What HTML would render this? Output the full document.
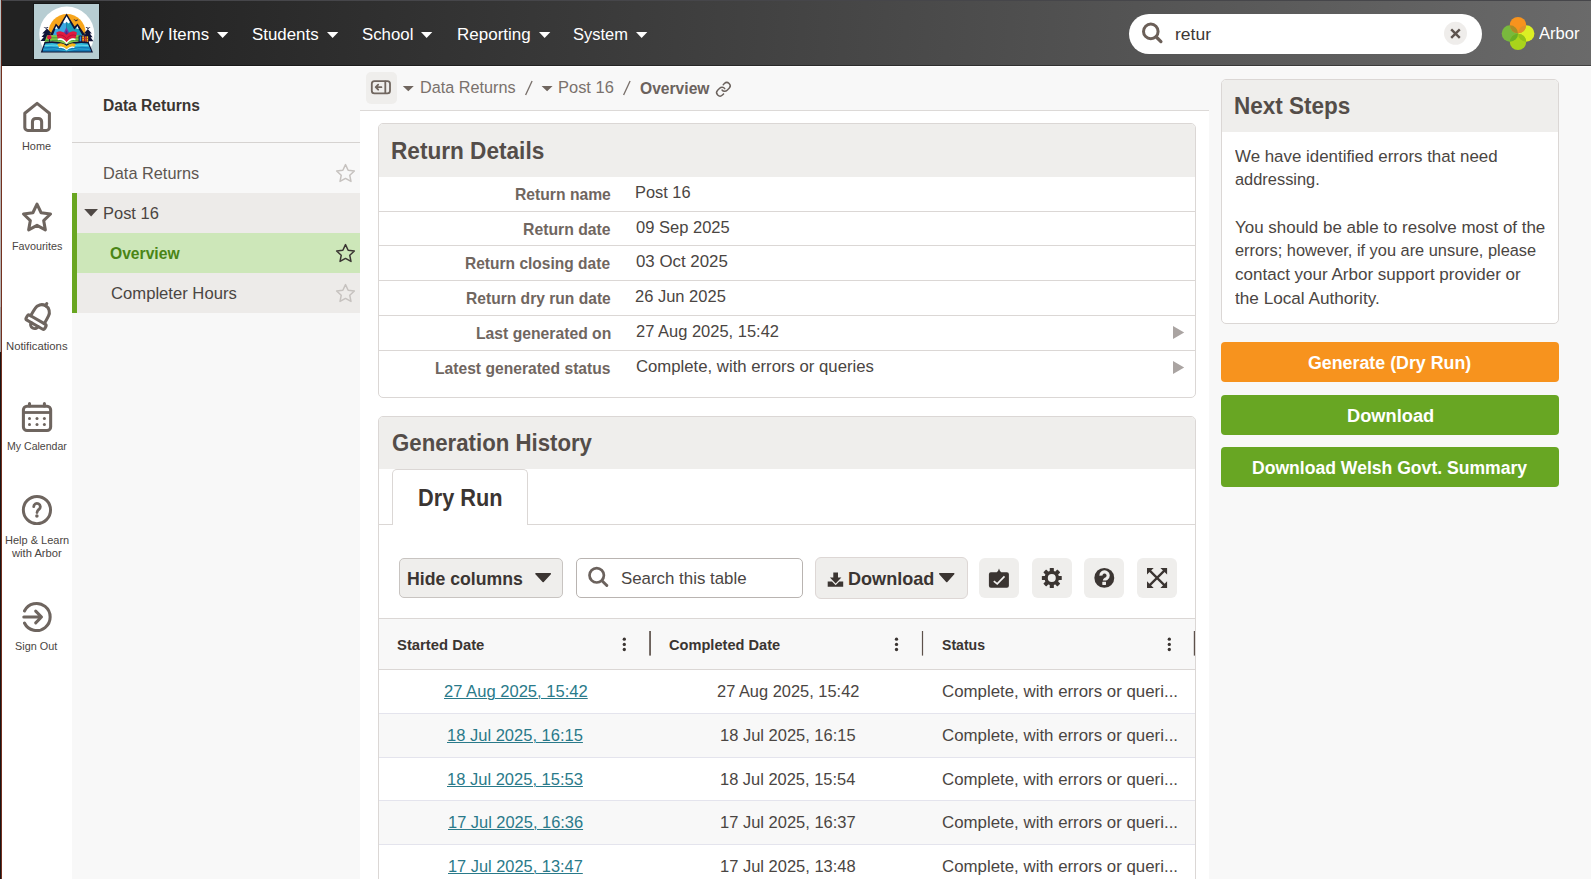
<!DOCTYPE html>
<html><head><meta charset="utf-8"><title>Data Returns</title>
<style>
html,body{margin:0;padding:0;}
body{width:1591px;height:879px;overflow:hidden;position:relative;background:#f8f8f8;font-family:"Liberation Sans", sans-serif;}
div,span,svg{box-sizing:border-box;}
svg{position:absolute;overflow:visible;}
</style></head><body>
<div style="position:absolute;left:0px;top:0px;width:1591px;height:66px;background:linear-gradient(93deg,#222 6%,#6a6a6a 100%);"></div>
<div style="position:absolute;left:0px;top:0px;width:1591px;height:1px;background:#46464a;"></div>
<div style="position:absolute;left:0px;top:65px;width:1591px;height:1px;background:rgba(0,0,0,.38);"></div>
<div style="position:absolute;left:0px;top:66px;width:1591px;height:1px;background:#fff;"></div>
<div style="position:absolute;left:33px;top:3px;width:67px;height:57px;background:#171717;"></div>
<svg style="left:34px;top:4px;overflow:hidden" width="65" height="55" viewBox="0 0 65 55">
<defs><clipPath id="lc"><rect x="0" y="0" width="65" height="47.500"/></clipPath>
<clipPath id="sunc"><rect x="0" y="0" width="65" height="31"/></clipPath></defs>
<rect width="65" height="55" fill="#b7cdd2"/>
<circle cx="32.800" cy="30.100" r="27.500" fill="#fff" clip-path="url(#lc)"/>
<circle cx="33" cy="28.600" r="18.600" fill="#f7a51b" clip-path="url(#sunc)"/>
<!-- trees -->
<path d="M13 24.500 l-4.800 5 h2.300 l-3 3.600 h2.300 l-3.300 4 h13 l-3.300-4 h2.300 l-3-3.600 h2.300z" fill="#0f1336"/>
<path d="M53.800 25 l-4 4.600 h2 l-2.800 3.600 h2 l-2.800 4 h11.200 l-2.800-4 h2 l-2.800-3.600 h2z" fill="#0f1336"/>
<!-- mountains outline -->
<path d="M15.800 31.500 L21.900 19.600 L24.700 22.400 L32.600 9.400 L40.600 22.400 L43.600 19.600 L51.500 31.500z" fill="#0f1336"/>
<path d="M18.800 31.500 L22.200 22.600 L25 25.400 L32.600 12.600 L32.600 31.500z" fill="#3aa8e2"/>
<path d="M32.600 12.600 L40.300 25.400 L43.300 22.600 L48.500 31.500 L32.600 31.500z" fill="#1b9db9"/>
<path d="M32.600 12.200 L36 18.200 L34.300 19.600 L32.600 17.800 L30.900 19.600 L29.200 18.200z" fill="#fff"/>
<path d="M22.200 22 l1.500 2.600 l-2.600 .3z M43.300 22 l1.500 2.900 l-2.600 -.3z" fill="#fff"/>
<path d="M28.800 31 L32.400 23.300 L36.200 31z" fill="#6b3aa6"/>
<path d="M30.600 31 L32.400 26.300 L34.300 31z" fill="#4c2a86"/>
<!-- birds -->
<path d="M9.500 23.300 q1.600-.8 2.500.7 q1-1.500 2.600-.6 q-1.600 0-2.600 1.700 q-.9-1.700-2.500-1.800z M39.400 15.800 q1.600-.8 2.500.7 q1-1.500 2.600-.6 q-1.600 0-2.600 1.700 q-.9-1.700-2.500-1.800z M51.500 23.400 q1.600-.8 2.500.7 q1-1.500 2.600-.6 q-1.600 0-2.600 1.700 q-.9-1.700-2.500-1.800z" fill="#0f1336"/>
<!-- fields -->
<path d="M10 39.500 L13 31.300 H46 V40z" fill="#7fc443"/>
<path d="M13 33.800 H45 M11.500 36.500 H45" stroke="#3f9a3c" stroke-width=".9"/>
<path d="M11 38.500 q6-2.500 12 0 M40 38.500 q3-1.500 6 0" stroke="#c8e68e" stroke-width="1" fill="none"/>
<!-- red tree -->
<circle cx="15.300" cy="33.300" r="2.200" fill="#e01a3f"/><rect x="15" y="35" width=".8" height="3.500" fill="#0f1336"/>
<!-- red book -->
<path d="M22.300 28.500 q5.500-3.500 10.300 2.200 q4.800-5.700 10.300-2.200 l-1.300 6.300 q-5-1.800-9 3.400 q-4-5.200-9-3.400z" fill="#e01a3f"/>
<path d="M23.200 31.500 q5-2 9.400 3.200 q4.400-5.200 9.400-3.200" stroke="#a80f2e" stroke-width=".8" fill="none"/>
<path d="M23.600 34.800 q5-1.800 9 3.400 q4-5.200 9-3.400 l-.3 1.500 q-5-1.300-8.700 3.700 q-3.700-5-8.700-3.700z" fill="#fff"/>
<!-- bookshelf -->
<rect x="44.600" y="31.600" width="10.200" height="7.800" fill="#0f1336"/>
<rect x="45.600" y="32.300" width="1.700" height="6.600" fill="#2f8fe0"/><rect x="48.200" y="32.300" width="1.900" height="6.600" fill="#f7a51b"/><rect x="50.600" y="32.300" width="1.700" height="6.600" fill="#e0432a"/><rect x="52.600" y="32.300" width="1.500" height="6.600" fill="#f9c21b"/>
<path d="M48 34.500 h6.400 M48 36.800 h6.400" stroke="#b5341c" stroke-width=".7"/>
<!-- big book base -->
<path d="M10.600 38 q11-2.500 22 2.200 q11-4.700 22-2.200 L59 48.600 H6.800z" fill="#0f1336"/>
<path d="M11.400 39.600 q10.500-2 21.200 2.400 q10.700-4.400 21.200-2.400 L57 47.300 H8.700z" fill="#2ab7da"/>
<path d="M9.800 43.300 q11-2 22.800 2 q11.800-4 22.800-2 L57 47.300 H8.700z" fill="#1579b7"/>
<path d="M10.500 41.600 q10.500-2 22 2 q11.500-4 22-2" stroke="#8fe0ee" stroke-width=".7" fill="none"/>
<path d="M9.500 45.300 q11-1.600 23 1.500 q12-3.100 23-1.500" stroke="#35c0e0" stroke-width=".8" fill="none"/>
<!-- yellow book -->
<path d="M23.300 40.200 q5-2.300 9.300 1.800 q4.300-4.100 9.300-1.800 l-1.600 2.800 q-4.200-1.400-7.700 2.300 q-3.500-3.700-7.700-2.300z" fill="#f9b81b"/>
<path d="M24.600 43 q4.200-1.400 8 2.300 q3.800-3.700 8-2.300 l-.5 1 q-4-1-7.500 2.600 q-3.500-3.600-7.500-2.600z" fill="#fff"/>
</svg>
<span style="position:absolute;left:140.95px;top:27.01px;font-size:16.8px;line-height:1;font-weight:400;color:#fff;letter-spacing:0.000px;white-space:nowrap;transform-origin:0 0;transform:scaleX(0.9995);">My Items</span>
<svg style="left:217.2px;top:31.700px" width="11.300" height="6" viewBox="0 0 11.300 6"><path d="M0 0h11.300L5.650 6z" fill="#fff"/></svg>
<span style="position:absolute;left:252.44px;top:27.01px;font-size:16.8px;line-height:1;font-weight:400;color:#fff;letter-spacing:0.000px;white-space:nowrap;transform-origin:0 0;transform:scaleX(1.0053);">Students</span>
<svg style="left:326.8px;top:31.700px" width="11.300" height="6" viewBox="0 0 11.300 6"><path d="M0 0h11.300L5.650 6z" fill="#fff"/></svg>
<span style="position:absolute;left:361.83px;top:27.01px;font-size:16.8px;line-height:1;font-weight:400;color:#fff;letter-spacing:0.000px;white-space:nowrap;transform-origin:0 0;transform:scaleX(1.0019);">School</span>
<svg style="left:421.3px;top:31.700px" width="11.300" height="6" viewBox="0 0 11.300 6"><path d="M0 0h11.300L5.650 6z" fill="#fff"/></svg>
<span style="position:absolute;left:456.89px;top:27.01px;font-size:16.8px;line-height:1;font-weight:400;color:#fff;letter-spacing:0.000px;white-space:nowrap;transform-origin:0 0;transform:scaleX(1.0128);">Reporting</span>
<svg style="left:538.6px;top:31.700px" width="11.300" height="6" viewBox="0 0 11.300 6"><path d="M0 0h11.300L5.650 6z" fill="#fff"/></svg>
<span style="position:absolute;left:573.08px;top:27.01px;font-size:16.8px;line-height:1;font-weight:400;color:#fff;letter-spacing:0.000px;white-space:nowrap;transform-origin:0 0;transform:scaleX(0.9804);">System</span>
<svg style="left:636px;top:31.700px" width="11.300" height="6" viewBox="0 0 11.300 6"><path d="M0 0h11.300L5.650 6z" fill="#fff"/></svg>
<div style="position:absolute;left:1129px;top:14px;width:353px;height:39.8px;background:#fff;border-radius:20px;"></div>
<svg style="left:0;top:0" width="1591" height="879" viewBox="0 0 1591 879" ><circle cx="1150.800" cy="31.400" r="7.300" fill="none" stroke="#6b5f58" stroke-width="3"/><path d="M1156.300 37 L1160.900 41.600" stroke="#6b5f58" stroke-width="3.300" stroke-linecap="round"/>
<circle cx="1455.500" cy="33.300" r="11.500" fill="#efedeb"/><path d="M1451.200 29.300 L1459.800 37.900 M1459.800 29.300 L1451.200 37.900" stroke="#5d544f" stroke-width="2.400"/></svg>
<span style="position:absolute;left:1175.41px;top:27.01px;font-size:16.8px;line-height:1;font-weight:400;color:#3d3835;letter-spacing:0.000px;white-space:nowrap;transform-origin:0 0;transform:scaleX(1.0442);">retur</span>
<svg style="left:0;top:0" width="1591" height="879" viewBox="0 0 1591 879" ><defs><clipPath id="ca"><circle cx="1518" cy="25.100" r="8.200"/></clipPath><clipPath id="cb"><circle cx="1518" cy="41.900" r="8.200"/></clipPath></defs>
<circle cx="1509.900" cy="33.500" r="8.200" fill="#79b93d"/>
<circle cx="1526.200" cy="33.500" r="8.200" fill="#dcee24"/>
<circle cx="1518" cy="41.900" r="8.200" fill="#a9d41b"/>
<circle cx="1518" cy="25.100" r="8.200" fill="#f7931e"/>
<circle cx="1509.900" cy="33.500" r="8.200" fill="#a98d26" clip-path="url(#ca)"/>
<circle cx="1526.200" cy="33.500" r="8.200" fill="#e0912a" clip-path="url(#ca)"/>
<circle cx="1509.900" cy="33.500" r="8.200" fill="#6aaf26" clip-path="url(#cb)"/>
<circle cx="1526.200" cy="33.500" r="8.200" fill="#93c118" clip-path="url(#cb)"/></svg>
<span style="position:absolute;left:1539.28px;top:26.01px;font-size:16.8px;line-height:1;font-weight:400;color:#fff;letter-spacing:0.000px;white-space:nowrap;transform-origin:0 0;transform:scaleX(0.9879);">Arbor</span>
<div style="position:absolute;left:0px;top:66px;width:72px;height:813px;background:#fff;"></div>
<svg style="left:0;top:0" width="1591" height="879" viewBox="0 0 1591 879" ><g fill="none" stroke="#6e655f" stroke-width="3.050" stroke-linejoin="round" stroke-linecap="round">
<path d="M24.800 113.200 L37.100 103.400 L49.400 113.200 V127.400 a3 3 0 0 1 -3 3 H27.800 a3 3 0 0 1 -3 -3 Z"/>
<path d="M32.450 130.400 V121.700 a3.200 3.200 0 0 1 3.200 -3.200 h2.800 a3.200 3.200 0 0 1 3.200 3.200 V130.400"/>
<path d="M37 204.200 L41.110 212.740 L50.500 214.010 L43.660 220.560 L45.350 229.890 L37 225.400 L28.650 229.890 L30.340 220.560 L23.500 214.010 L32.890 212.740 Z"/>
<g transform="translate(36.050 322.150) rotate(30)">
<path d="M-7.900 -2.800 C-7.900 -6 -8 -8 -7.700 -11.300 a7.700 7.700 0 0 1 15.400 0 C8 -8 7.900 -6 7.900 -2.800"/>
<rect x="-10.700" y="-2.800" width="21.400" height="5.600" rx="1.800"/>
<path d="M0 -18.900 V-21.500"/>
<path d="M-4 2.800 a4 4 0 0 0 8 0"/></g>
<rect x="23.400" y="406.200" width="27.250" height="24.300" rx="3.600"/>
<path d="M23.400 412.500 H50.650" stroke-width="2.800" stroke-linecap="butt"/>
<path d="M29.500 403.400 V406 M44.400 403.400 V406"/>
<circle cx="36.950" cy="510" r="13.600" stroke-width="2.950"/>
<path d="M33.700 506.700 a3.300 3.300 0 1 1 5.300 2.600 c-1.300 1 -2 1.500 -2 3.200" stroke-width="2.800"/>
<path d="M24.450 611 A13.550 13.550 0 1 1 24.450 623"/>
<path d="M23.800 617 H41.300 M35.700 611.200 L41.500 617 L35.700 622.800"/>
</g>
<g fill="#6e655f"><circle cx="29.500" cy="418.400" r="1.500"/><circle cx="37" cy="418.400" r="1.500"/><circle cx="44.400" cy="418.400" r="1.500"/><circle cx="29.500" cy="424.500" r="1.500"/><circle cx="37" cy="424.500" r="1.500"/><circle cx="44.400" cy="424.500" r="1.500"/>
<circle cx="36.900" cy="515.900" r="1.750"/></g></svg>
<span style="position:absolute;left:22.34px;top:141.00px;font-size:10.8px;line-height:1;font-weight:400;color:#4a4542;letter-spacing:0.000px;white-space:nowrap;transform-origin:0 0;transform:scaleX(1.0069);">Home</span>
<span style="position:absolute;left:11.68px;top:241.00px;font-size:10.8px;line-height:1;font-weight:400;color:#4a4542;letter-spacing:0.000px;white-space:nowrap;transform-origin:0 0;transform:scaleX(0.9997);">Favourites</span>
<span style="position:absolute;left:5.69px;top:341.00px;font-size:10.8px;line-height:1;font-weight:400;color:#4a4542;letter-spacing:0.000px;white-space:nowrap;transform-origin:0 0;transform:scaleX(1.0465);">Notifications</span>
<span style="position:absolute;left:7.36px;top:441.00px;font-size:10.8px;line-height:1;font-weight:400;color:#4a4542;letter-spacing:0.000px;white-space:nowrap;transform-origin:0 0;transform:scaleX(0.9777);">My Calendar</span>
<span style="position:absolute;left:4.93px;top:535.00px;font-size:10.8px;line-height:1;font-weight:400;color:#4a4542;letter-spacing:0.000px;white-space:nowrap;transform-origin:0 0;transform:scaleX(1.0188);">Help &amp; Learn</span>
<span style="position:absolute;left:12.35px;top:548.00px;font-size:10.8px;line-height:1;font-weight:400;color:#4a4542;letter-spacing:0.000px;white-space:nowrap;transform-origin:0 0;transform:scaleX(1.0360);">with Arbor</span>
<span style="position:absolute;left:15.00px;top:641.00px;font-size:10.8px;line-height:1;font-weight:400;color:#4a4542;letter-spacing:0.000px;white-space:nowrap;transform-origin:0 0;transform:scaleX(1.0044);">Sign Out</span>
<div style="position:absolute;left:0px;top:0px;width:1px;height:66px;background:#b8c2c2;"></div>
<div style="position:absolute;left:0px;top:66px;width:1px;height:241px;background:#b4b2b2;"></div>
<div style="position:absolute;left:0px;top:307px;width:1px;height:45px;background:#9e9c9c;"></div>
<div style="position:absolute;left:0px;top:352px;width:1px;height:527px;background:#1a1616;"></div>
<div style="position:absolute;left:1px;top:0px;width:1px;height:879px;background:linear-gradient(#5a241a 0,#5a241a 66px,#74301f 66px,#74301f 100%);"></div>
<span style="position:absolute;left:102.95px;top:98.00px;font-size:16px;line-height:1;font-weight:700;color:#3a3532;letter-spacing:0.000px;white-space:nowrap;transform-origin:0 0;transform:scaleX(0.9732);">Data Returns</span>
<div style="position:absolute;left:72px;top:142px;width:288px;height:1px;background:#d6d3d1;"></div>
<span style="position:absolute;left:102.99px;top:166.01px;font-size:16.6px;line-height:1;font-weight:400;color:#5d5651;letter-spacing:0.000px;white-space:nowrap;transform-origin:0 0;transform:scaleX(0.9834);">Data Returns</span>
<svg style="left:0;top:0" width="1591" height="879" viewBox="0 0 1591 879" ><path d="M345.50 164.60 L348.15 170.26 L354.34 171.03 L349.78 175.29 L350.97 181.42 L345.50 178.40 L340.03 181.42 L341.22 175.29 L336.66 171.03 L342.85 170.26Z" fill="none" stroke="#c6c2bf" stroke-width="1.500" stroke-linejoin="round"/></svg>
<div style="position:absolute;left:72px;top:193px;width:288px;height:120px;background:#edebe9;"></div>
<div style="position:absolute;left:72px;top:233px;width:288px;height:40px;background:#cde7b9;"></div>
<div style="position:absolute;left:72px;top:193px;width:5px;height:120px;background:#69a620;"></div>
<svg style="left:0;top:0" width="1591" height="879" viewBox="0 0 1591 879" ><path d="M84.200 209 h13.800 l-6.900 7.500z" fill="#4f4845"/></svg>
<span style="position:absolute;left:103.38px;top:206.01px;font-size:16.8px;line-height:1;font-weight:400;color:#4a4542;letter-spacing:0.000px;white-space:nowrap;transform-origin:0 0;transform:scaleX(0.9811);">Post 16</span>
<span style="position:absolute;left:110.10px;top:246.00px;font-size:16px;line-height:1;font-weight:700;color:#4a8516;letter-spacing:0.000px;white-space:nowrap;transform-origin:0 0;transform:scaleX(0.9774);">Overview</span>
<svg style="left:0;top:0" width="1591" height="879" viewBox="0 0 1591 879" ><path d="M345.50 244.60 L348.15 250.26 L354.34 251.03 L349.78 255.29 L350.97 261.42 L345.50 258.40 L340.03 261.42 L341.22 255.29 L336.66 251.03 L342.85 250.26Z" fill="none" stroke="#3a3532" stroke-width="1.500" stroke-linejoin="round"/></svg>
<span style="position:absolute;left:110.98px;top:286.01px;font-size:16.8px;line-height:1;font-weight:400;color:#4a4542;letter-spacing:0.000px;white-space:nowrap;transform-origin:0 0;transform:scaleX(0.9915);">Completer Hours</span>
<svg style="left:0;top:0" width="1591" height="879" viewBox="0 0 1591 879" ><path d="M345.50 284.60 L348.15 290.26 L354.34 291.03 L349.78 295.29 L350.97 301.42 L345.50 298.40 L340.03 301.42 L341.22 295.29 L336.66 291.03 L342.85 290.26Z" fill="none" stroke="#c6c2bf" stroke-width="1.500" stroke-linejoin="round"/></svg>
<div style="position:absolute;left:360px;top:110px;width:849px;height:769px;background:#fff;border-top:1px solid #dcd9d7;"></div>
<div style="position:absolute;left:366px;top:72px;width:31px;height:32px;background:#efeeec;border-radius:5px;"></div>
<svg style="left:0;top:0" width="1591" height="879" viewBox="0 0 1591 879" ><g fill="none" stroke="#70665f" stroke-width="1.800" stroke-linejoin="round" stroke-linecap="round"><rect x="371.800" y="81.100" width="18.200" height="12.300" rx="2.600"/><path d="M385.300 81.500 V93"/><path d="M381.400 87.200 H376 M378.200 84.700 L375.700 87.200 L378.200 89.700"/></g>
<path d="M402.800 85.900 h11 l-5.500 5.400z M541.600 85.900 h11 l-5.500 5.400z" fill="#70665f"/>
<path d="M525.600 95 L532.100 81 M623.600 95 L630.100 81" stroke="#7a716c" stroke-width="1.350" fill="none"/>
<g transform="translate(715.300 81.200) scale(.675)" fill="none" stroke="#6b625d" stroke-width="2.200" stroke-linecap="round" stroke-linejoin="round"><path d="M10 13a5 5 0 0 0 7.540.540l3-3a5 5 0 0 0-7.070-7.070l-1.720 1.710"/><path d="M14 11a5 5 0 0 0-7.540-.540l-3 3a5 5 0 0 0 7.070 7.070l1.710-1.710"/></g></svg>
<span style="position:absolute;left:419.99px;top:80.01px;font-size:16.8px;line-height:1;font-weight:400;color:#7a716c;letter-spacing:0.000px;white-space:nowrap;transform-origin:0 0;transform:scaleX(0.9664);">Data Returns</span>
<span style="position:absolute;left:558.44px;top:80.01px;font-size:16.8px;line-height:1;font-weight:400;color:#7a716c;letter-spacing:0.000px;white-space:nowrap;transform-origin:0 0;transform:scaleX(0.9806);">Post 16</span>
<span style="position:absolute;left:639.56px;top:81.00px;font-size:16px;line-height:1;font-weight:700;color:#6b625d;letter-spacing:0.000px;white-space:nowrap;transform-origin:0 0;transform:scaleX(0.9768);">Overview</span>
<div style="position:absolute;left:378px;top:123px;width:818px;height:275px;background:#fff;border:1px solid #dbd7d5;border-radius:5px;"></div>
<div style="position:absolute;left:379px;top:124px;width:816px;height:53px;background:#efeeec;border-radius:4px 4px 0 0;"></div>
<span style="position:absolute;left:391.34px;top:139.01px;font-size:24.3px;line-height:1;font-weight:700;color:#544d49;letter-spacing:0.000px;white-space:nowrap;transform-origin:0 0;transform:scaleX(0.9303);">Return Details</span>
<div style="position:absolute;left:379px;top:211px;width:816px;height:1px;background:#dbd7d5;"></div>
<div style="position:absolute;left:379px;top:245px;width:816px;height:1px;background:#dbd7d5;"></div>
<div style="position:absolute;left:379px;top:280px;width:816px;height:1px;background:#dbd7d5;"></div>
<div style="position:absolute;left:379px;top:315px;width:816px;height:1px;background:#dbd7d5;"></div>
<div style="position:absolute;left:379px;top:350px;width:816px;height:1px;background:#dbd7d5;"></div>
<span style="position:absolute;left:514.85px;top:186.02px;font-size:16.5px;line-height:1;font-weight:700;color:#70665f;letter-spacing:0.000px;white-space:nowrap;transform-origin:0 0;transform:scaleX(0.9503);">Return name</span>
<span style="position:absolute;left:634.88px;top:185.01px;font-size:16.8px;line-height:1;font-weight:400;color:#4a4542;letter-spacing:0.000px;white-space:nowrap;transform-origin:0 0;transform:scaleX(0.9763);">Post 16</span>
<span style="position:absolute;left:522.57px;top:221.02px;font-size:16.5px;line-height:1;font-weight:700;color:#70665f;letter-spacing:0.000px;white-space:nowrap;transform-origin:0 0;transform:scaleX(0.9559);">Return date</span>
<span style="position:absolute;left:635.75px;top:220.01px;font-size:16.8px;line-height:1;font-weight:400;color:#4a4542;letter-spacing:0.000px;white-space:nowrap;transform-origin:0 0;transform:scaleX(0.9846);">09 Sep 2025</span>
<span style="position:absolute;left:465.17px;top:255.02px;font-size:16.5px;line-height:1;font-weight:700;color:#70665f;letter-spacing:0.000px;white-space:nowrap;transform-origin:0 0;transform:scaleX(0.9418);">Return closing date</span>
<span style="position:absolute;left:635.75px;top:254.01px;font-size:16.8px;line-height:1;font-weight:400;color:#4a4542;letter-spacing:0.000px;white-space:nowrap;transform-origin:0 0;transform:scaleX(1.0045);">03 Oct 2025</span>
<span style="position:absolute;left:465.95px;top:290.02px;font-size:16.5px;line-height:1;font-weight:700;color:#70665f;letter-spacing:0.000px;white-space:nowrap;transform-origin:0 0;transform:scaleX(0.9455);">Return dry run date</span>
<span style="position:absolute;left:635.20px;top:289.01px;font-size:16.8px;line-height:1;font-weight:400;color:#4a4542;letter-spacing:0.000px;white-space:nowrap;transform-origin:0 0;transform:scaleX(0.9829);">26 Jun 2025</span>
<span style="position:absolute;left:475.66px;top:325.02px;font-size:16.5px;line-height:1;font-weight:700;color:#70665f;letter-spacing:0.000px;white-space:nowrap;transform-origin:0 0;transform:scaleX(0.9521);">Last generated on</span>
<span style="position:absolute;left:635.67px;top:324.01px;font-size:16.8px;line-height:1;font-weight:400;color:#4a4542;letter-spacing:0.000px;white-space:nowrap;transform-origin:0 0;transform:scaleX(0.9825);">27 Aug 2025, 15:42</span>
<span style="position:absolute;left:434.96px;top:360.02px;font-size:16.5px;line-height:1;font-weight:700;color:#70665f;letter-spacing:0.000px;white-space:nowrap;transform-origin:0 0;transform:scaleX(0.9476);">Latest generated status</span>
<span style="position:absolute;left:635.60px;top:359.01px;font-size:16.8px;line-height:1;font-weight:400;color:#4a4542;letter-spacing:0.000px;white-space:nowrap;transform-origin:0 0;transform:scaleX(0.9964);">Complete, with errors or queries</span>
<svg style="left:0;top:0" width="1591" height="879" viewBox="0 0 1591 879" ><path d="M1173 326 v13 l11.200 -6.500z M1173 361 v13 l11.200 -6.500z" fill="#aaa4a2"/></svg>
<div style="position:absolute;left:378px;top:416px;width:818px;height:480px;background:#fff;border:1px solid #dbd7d5;border-radius:5px 5px 0 0;"></div>
<div style="position:absolute;left:379px;top:417px;width:816px;height:52px;background:#efeeec;border-radius:4px 4px 0 0;"></div>
<span style="position:absolute;left:391.91px;top:431.01px;font-size:24.3px;line-height:1;font-weight:700;color:#544d49;letter-spacing:0.000px;white-space:nowrap;transform-origin:0 0;transform:scaleX(0.9143);">Generation History</span>
<div style="position:absolute;left:379px;top:524px;width:816px;height:1px;background:#dbd7d5;"></div>
<div style="position:absolute;left:392px;top:469px;width:136px;height:56px;background:#fff;border:1px solid #dbd7d5;border-bottom:none;border-radius:5px 5px 0 0;"></div>
<span style="position:absolute;left:418.09px;top:486.01px;font-size:24.3px;line-height:1;font-weight:700;color:#3b3532;letter-spacing:0.000px;white-space:nowrap;transform-origin:0 0;transform:scaleX(0.8958);">Dry Run</span>
<div style="position:absolute;left:399px;top:558px;width:164px;height:40px;background:#efeeec;border:1px solid #c8c4c1;border-radius:5px;"></div>
<span style="position:absolute;left:407.49px;top:570.01px;font-size:18.6px;line-height:1;font-weight:700;color:#3b3532;letter-spacing:0.000px;white-space:nowrap;transform-origin:0 0;transform:scaleX(0.9509);">Hide columns</span>
<div style="position:absolute;left:576px;top:558px;width:227px;height:40px;background:#fff;border:1px solid #b9b4b1;border-radius:5px;"></div>
<span style="position:absolute;left:621.49px;top:571.01px;font-size:16.8px;line-height:1;font-weight:400;color:#4a4542;letter-spacing:0.000px;white-space:nowrap;transform-origin:0 0;transform:scaleX(1.0044);">Search this table</span>
<div style="position:absolute;left:815px;top:557px;width:153px;height:42px;background:#efeeec;border:1px solid #ddd7d5;border-radius:6px;"></div>
<span style="position:absolute;left:847.87px;top:570.01px;font-size:18.6px;line-height:1;font-weight:700;color:#3b3532;letter-spacing:0.000px;white-space:nowrap;transform-origin:0 0;transform:scaleX(0.9726);">Download</span>
<div style="position:absolute;left:979px;top:558px;width:40px;height:40px;background:#efeeec;border-radius:6px;"></div>
<div style="position:absolute;left:1032px;top:558px;width:40px;height:40px;background:#efeeec;border-radius:6px;"></div>
<div style="position:absolute;left:1084px;top:558px;width:40px;height:40px;background:#efeeec;border-radius:6px;"></div>
<div style="position:absolute;left:1137px;top:558px;width:40px;height:40px;background:#efeeec;border-radius:6px;"></div>
<svg style="left:0;top:0" width="1591" height="879" viewBox="0 0 1591 879" ><g fill="#3b3532" stroke="#3b3532" stroke-linejoin="round" stroke-width="1.600"><path d="M536 573.800 h14.300 l-7.150 7.700z M939.800 573.800 h13.900 l-6.950 7.700z"/></g>
<circle cx="596.700" cy="575.300" r="7.200" fill="none" stroke="#6b625d" stroke-width="2.700"/><path d="M602 580.700 L606.800 585.500" stroke="#6b625d" stroke-width="3" stroke-linecap="round"/>
<g fill="#3b3532"><path d="M833.300 572.400 h4.700 v5 h3.400 l-5.750 6 l-5.750 -6 h3.400z"/><path d="M827.700 581.600 h4.300 l3.650 3.600 l3.650 -3.600 h3.900 v5.200 h-15.500z"/>
<path d="M990.900 572.300 h5.800 q1.700 -1.200 2.300 -3.800 q.6 2.600 2.300 3.800 h5.600 a2 2 0 0 1 2 2 v11.400 a2 2 0 0 1 -2 2 h-16 a2 2 0 0 1 -2 -2 v-11.400 a2 2 0 0 1 2 -2z"/>
<g transform="translate(1051.800 578)"><circle r="7.300"/><rect x="-2.050" y="-9.950" width="4.100" height="5" rx=".5" transform="rotate(0)"/><rect x="-2.050" y="-9.950" width="4.100" height="5" rx=".5" transform="rotate(45)"/><rect x="-2.050" y="-9.950" width="4.100" height="5" rx=".5" transform="rotate(90)"/><rect x="-2.050" y="-9.950" width="4.100" height="5" rx=".5" transform="rotate(135)"/><rect x="-2.050" y="-9.950" width="4.100" height="5" rx=".5" transform="rotate(180)"/><rect x="-2.050" y="-9.950" width="4.100" height="5" rx=".5" transform="rotate(225)"/><rect x="-2.050" y="-9.950" width="4.100" height="5" rx=".5" transform="rotate(270)"/><rect x="-2.050" y="-9.950" width="4.100" height="5" rx=".5" transform="rotate(315)"/></g>
<circle cx="1104.300" cy="577.900" r="9.950"/></g>
<path d="M993.800 581.100 L997.200 583.900 L1004.500 576.400" fill="none" stroke="#f4f3f2" stroke-width="1.700"/>
<circle cx="1051.800" cy="578" r="4" fill="#efeeec"/>
<path d="M1100.900 575.600 a3.650 3.650 0 1 1 5.600 3 c-1.500 .9 -2.100 1.100 -2.100 1.900" fill="none" stroke="#efeeec" stroke-width="3.200"/><rect x="1102.300" y="581.700" width="3.700" height="3.300" rx=".4" fill="#efeeec"/>
<path d="M1149.500 570.400 L1164.600 585.400 M1164.600 570.400 L1149.500 585.400" fill="none" stroke="#3b3532" stroke-width="2.300"/><path d="M1147 567.900 h6.700 l-6.700 6.700z M1167.100 567.900 v6.700 l-6.700 -6.700z M1167.100 587.900 h-6.700 l6.700 -6.700z M1147 587.900 v-6.700 l6.700 6.700z" fill="#3b3532"/></svg>
<div style="position:absolute;left:379px;top:618px;width:816px;height:52px;background:#f8f8f8;border-top:1px solid #dbd7d5;border-bottom:1px solid #dbd7d5;"></div>
<span style="position:absolute;left:396.76px;top:638.02px;font-size:14.6px;line-height:1;font-weight:700;color:#3b3532;letter-spacing:0.000px;white-space:nowrap;transform-origin:0 0;transform:scaleX(1.0156);">Started Date</span>
<span style="position:absolute;left:668.76px;top:638.02px;font-size:14.6px;line-height:1;font-weight:700;color:#3b3532;letter-spacing:0.000px;white-space:nowrap;transform-origin:0 0;transform:scaleX(1.0002);">Completed Date</span>
<span style="position:absolute;left:941.86px;top:638.02px;font-size:14.6px;line-height:1;font-weight:700;color:#3b3532;letter-spacing:0.000px;white-space:nowrap;transform-origin:0 0;transform:scaleX(0.9644);">Status</span>
<svg style="left:0;top:0" width="1591" height="879" viewBox="0 0 1591 879" ><g fill="#3b3532"><circle cx="624.3" cy="639.2" r="1.650"/><circle cx="624.3" cy="644.4" r="1.650"/><circle cx="624.3" cy="649.5" r="1.650"/><circle cx="896.5" cy="639.2" r="1.650"/><circle cx="896.5" cy="644.4" r="1.650"/><circle cx="896.5" cy="649.5" r="1.650"/><circle cx="1169.3" cy="639.2" r="1.650"/><circle cx="1169.3" cy="644.4" r="1.650"/><circle cx="1169.3" cy="649.5" r="1.650"/></g><g fill="#5d514b"><rect x="649.200" y="631" width="1.700" height="24.600"/><rect x="921.900" y="631" width="1.200" height="24.600"/><rect x="1193.800" y="631" width="1.200" height="24.600"/></g></svg>
<div style="position:absolute;left:379px;top:714px;width:816px;height:43px;background:#f8f8f8;"></div>
<div style="position:absolute;left:379px;top:801px;width:816px;height:43px;background:#f8f8f8;"></div>
<div style="position:absolute;left:379px;top:713px;width:816px;height:1px;background:#e4e4ed;"></div>
<div style="position:absolute;left:379px;top:757px;width:816px;height:1px;background:#e4e4ed;"></div>
<div style="position:absolute;left:379px;top:800px;width:816px;height:1px;background:#e4e4ed;"></div>
<div style="position:absolute;left:379px;top:844px;width:816px;height:1px;background:#e4e4ed;"></div>
<span style="position:absolute;left:443.67px;top:684.01px;font-size:16.8px;line-height:1;font-weight:400;color:#2a7a8a;letter-spacing:0.000px;white-space:nowrap;transform-origin:0 0;transform:scaleX(0.9873);text-decoration:underline;text-decoration-thickness:1.300px;text-underline-offset:1px;">27 Aug 2025, 15:42</span>
<span style="position:absolute;left:717.21px;top:684.01px;font-size:16.8px;line-height:1;font-weight:400;color:#4a4542;letter-spacing:0.000px;white-space:nowrap;transform-origin:0 0;transform:scaleX(0.9782);">27 Aug 2025, 15:42</span>
<span style="position:absolute;left:941.81px;top:684.01px;font-size:16.8px;line-height:1;font-weight:400;color:#4a4542;letter-spacing:0.000px;white-space:nowrap;transform-origin:0 0;transform:scaleX(1.0042);">Complete, with errors or queri...</span>
<span style="position:absolute;left:447.13px;top:728.01px;font-size:16.8px;line-height:1;font-weight:400;color:#2a7a8a;letter-spacing:0.000px;white-space:nowrap;transform-origin:0 0;transform:scaleX(0.9842);text-decoration:underline;text-decoration-thickness:1.300px;text-underline-offset:1px;">18 Jul 2025, 16:15</span>
<span style="position:absolute;left:719.83px;top:728.01px;font-size:16.8px;line-height:1;font-weight:400;color:#4a4542;letter-spacing:0.000px;white-space:nowrap;transform-origin:0 0;transform:scaleX(0.9820);">18 Jul 2025, 16:15</span>
<span style="position:absolute;left:941.81px;top:728.01px;font-size:16.8px;line-height:1;font-weight:400;color:#4a4542;letter-spacing:0.000px;white-space:nowrap;transform-origin:0 0;transform:scaleX(1.0042);">Complete, with errors or queri...</span>
<span style="position:absolute;left:447.13px;top:772.01px;font-size:16.8px;line-height:1;font-weight:400;color:#2a7a8a;letter-spacing:0.000px;white-space:nowrap;transform-origin:0 0;transform:scaleX(0.9843);text-decoration:underline;text-decoration-thickness:1.300px;text-underline-offset:1px;">18 Jul 2025, 15:53</span>
<span style="position:absolute;left:720.36px;top:772.01px;font-size:16.8px;line-height:1;font-weight:400;color:#4a4542;letter-spacing:0.000px;white-space:nowrap;transform-origin:0 0;transform:scaleX(0.9796);">18 Jul 2025, 15:54</span>
<span style="position:absolute;left:941.81px;top:772.01px;font-size:16.8px;line-height:1;font-weight:400;color:#4a4542;letter-spacing:0.000px;white-space:nowrap;transform-origin:0 0;transform:scaleX(1.0042);">Complete, with errors or queri...</span>
<span style="position:absolute;left:448.08px;top:815.01px;font-size:16.8px;line-height:1;font-weight:400;color:#2a7a8a;letter-spacing:0.000px;white-space:nowrap;transform-origin:0 0;transform:scaleX(0.9782);text-decoration:underline;text-decoration-thickness:1.300px;text-underline-offset:1px;">17 Jul 2025, 16:36</span>
<span style="position:absolute;left:719.83px;top:815.01px;font-size:16.8px;line-height:1;font-weight:400;color:#4a4542;letter-spacing:0.000px;white-space:nowrap;transform-origin:0 0;transform:scaleX(0.9822);">17 Jul 2025, 16:37</span>
<span style="position:absolute;left:941.81px;top:815.01px;font-size:16.8px;line-height:1;font-weight:400;color:#4a4542;letter-spacing:0.000px;white-space:nowrap;transform-origin:0 0;transform:scaleX(1.0042);">Complete, with errors or queri...</span>
<span style="position:absolute;left:447.52px;top:859.01px;font-size:16.8px;line-height:1;font-weight:400;color:#2a7a8a;letter-spacing:0.000px;white-space:nowrap;transform-origin:0 0;transform:scaleX(0.9760);text-decoration:underline;text-decoration-thickness:1.300px;text-underline-offset:1px;">17 Jul 2025, 13:47</span>
<span style="position:absolute;left:719.83px;top:859.01px;font-size:16.8px;line-height:1;font-weight:400;color:#4a4542;letter-spacing:0.000px;white-space:nowrap;transform-origin:0 0;transform:scaleX(0.9821);">17 Jul 2025, 13:48</span>
<span style="position:absolute;left:941.81px;top:859.01px;font-size:16.8px;line-height:1;font-weight:400;color:#4a4542;letter-spacing:0.000px;white-space:nowrap;transform-origin:0 0;transform:scaleX(1.0042);">Complete, with errors or queri...</span>
<div style="position:absolute;left:1221px;top:79px;width:338px;height:245px;background:#fff;border:1px solid #dbd7d5;border-radius:5px;"></div>
<div style="position:absolute;left:1222px;top:80px;width:336px;height:52px;background:#efeeec;border-radius:4px 4px 0 0;"></div>
<span style="position:absolute;left:1234.04px;top:94.01px;font-size:24.3px;line-height:1;font-weight:700;color:#544d49;letter-spacing:0.000px;white-space:nowrap;transform-origin:0 0;transform:scaleX(0.9263);">Next Steps</span>
<span style="position:absolute;left:1235.28px;top:149.01px;font-size:16.8px;line-height:1;font-weight:400;color:#4a4542;letter-spacing:0.000px;white-space:nowrap;transform-origin:0 0;transform:scaleX(1.0065);">We have identified errors that need</span>
<span style="position:absolute;left:1235.04px;top:172.01px;font-size:16.8px;line-height:1;font-weight:400;color:#4a4542;letter-spacing:0.000px;white-space:nowrap;transform-origin:0 0;transform:scaleX(0.9769);">addressing.</span>
<span style="position:absolute;left:1234.50px;top:220.01px;font-size:16.8px;line-height:1;font-weight:400;color:#4a4542;letter-spacing:0.000px;white-space:nowrap;transform-origin:0 0;transform:scaleX(1.0099);">You should be able to resolve most of the</span>
<span style="position:absolute;left:1234.61px;top:243.01px;font-size:16.8px;line-height:1;font-weight:400;color:#4a4542;letter-spacing:0.000px;white-space:nowrap;transform-origin:0 0;transform:scaleX(0.9753);">errors; however, if you are unsure, please</span>
<span style="position:absolute;left:1235.04px;top:267.01px;font-size:16.8px;line-height:1;font-weight:400;color:#4a4542;letter-spacing:0.000px;white-space:nowrap;transform-origin:0 0;transform:scaleX(1.0142);">contact your Arbor support provider or</span>
<span style="position:absolute;left:1235.25px;top:291.01px;font-size:16.8px;line-height:1;font-weight:400;color:#4a4542;letter-spacing:0.000px;white-space:nowrap;transform-origin:0 0;transform:scaleX(1.0229);">the Local Authority.</span>
<div style="position:absolute;left:1221px;top:342px;width:338px;height:40px;background:#f7931e;border-radius:4px;"></div>
<span style="position:absolute;left:1308.06px;top:354.01px;font-size:18.3px;line-height:1;font-weight:700;color:#fff;letter-spacing:0.000px;white-space:nowrap;transform-origin:0 0;transform:scaleX(0.9738);">Generate (Dry Run)</span>
<div style="position:absolute;left:1221px;top:395px;width:338px;height:40px;background:#68a623;border-radius:4px;"></div>
<span style="position:absolute;left:1346.82px;top:407.01px;font-size:18.3px;line-height:1;font-weight:700;color:#fff;letter-spacing:0.000px;white-space:nowrap;transform-origin:0 0;transform:scaleX(0.9988);">Download</span>
<div style="position:absolute;left:1221px;top:447px;width:338px;height:40px;background:#68a623;border-radius:4px;"></div>
<span style="position:absolute;left:1251.72px;top:459.01px;font-size:18.3px;line-height:1;font-weight:700;color:#fff;letter-spacing:0.000px;white-space:nowrap;transform-origin:0 0;transform:scaleX(0.9616);">Download Welsh Govt. Summary</span>
</body></html>
